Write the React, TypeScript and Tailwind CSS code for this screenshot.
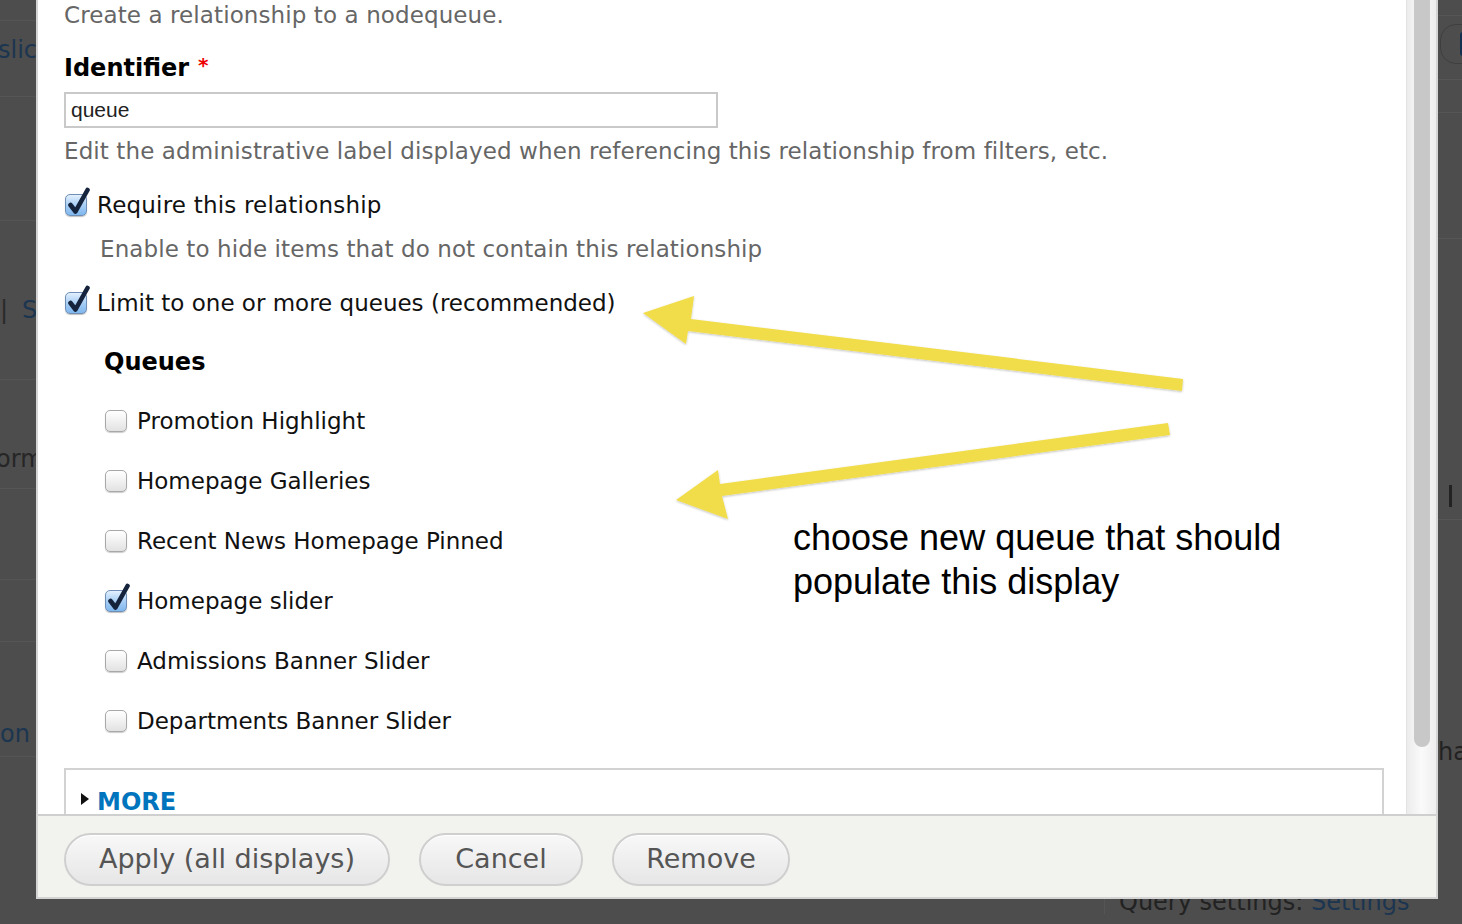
import React from "react";

const BODY = "font-['DejaVu_Sans','Noto_Sans',sans-serif]";

function Check({ checked }: { checked?: boolean }) {
  return (
    <span className="relative inline-block w-[22px] h-[22px] shrink-0">
      <span
        className={
          checked
            ? "absolute inset-0 rounded-[5px] border border-[#6f8fb6] bg-gradient-to-b from-[#e3f0fd] via-[#a9cff5] to-[#7fb7ee] shadow-[0_1px_1px_rgba(0,0,0,0.25)]"
            : "absolute inset-0 rounded-[5px] border border-[#a8a8a8] bg-gradient-to-b from-[#ffffff] via-[#f1f1f1] to-[#e2e2e2] shadow-[0_1px_1px_rgba(0,0,0,0.2)]"
        }
      />
      {checked && (
        <svg className="absolute left-[2px] top-[-7px]" width="24" height="29" viewBox="0 0 24 29">
          <path d="M3.5 18 L8.5 24.5 L20.5 3" fill="none" stroke="#15233d" strokeWidth="4.6" strokeLinecap="round" strokeLinejoin="round" />
        </svg>
      )}
    </span>
  );
}

function Row({ label, checked }: { label: string; checked?: boolean }) {
  return (
    <div className="h-[60px] flex items-center pl-[41px] gap-[10px]">
      <Check checked={checked} />
      <span className="text-[23px] text-[#111]">{label}</span>
    </div>
  );
}

function Btn({ children, w }: { children: React.ReactNode; w: string }) {
  return (
    <button
      className={`${w} h-[53px] rounded-full border-2 border-[#cfcfcf] bg-gradient-to-b from-[#f8f8f8] to-[#e6e6e6] text-[27px] text-[#555] flex items-center justify-center shadow-[0_1px_0_#fff_inset]`}
    >
      {children}
    </button>
  );
}

export default function App() {
  return (
    <div className={`relative w-[1462px] h-[924px] overflow-hidden bg-[#4d4d4d] ${BODY}`}>
      {/* background page fragments (behind overlay) */}
      <div className="absolute inset-0 flex justify-between">
        <div className="w-[36px] flex flex-col text-[24px]">
          <div className="h-[21px] border-b border-[#555]" />
          <div className="h-[76px] border-b border-[#555] flex items-start pt-[11px] text-[#1c3550] -ml-[2px]">slic</div>
          <div className="h-[124px] border-b border-[#555]" />
          <div className="h-[159px] border-b border-[#555] flex items-start pt-[71px] gap-[14px] text-[#1c3550]"><span className="text-[#2a2a2a]">|</span><span>S</span></div>
          <div className="h-[109px] border-b border-[#555] flex items-end pb-[11px] text-[#262626] -ml-[4px]">orm</div>
          <div className="h-[91px] border-b border-[#555]" />
          <div className="h-[62px] border-b border-[#555]" />
          <div className="h-[115px] border-b border-[#555] flex items-end pb-[4px] text-[#1c3550]">on</div>
          <div className="flex-1" />
        </div>
        <div className="w-[24px] flex flex-col text-[24px]">
          <div className="h-[16px] border-b border-[#555]" />
          <div className="h-[64px] border-b border-[#555] relative">
            <div className="absolute left-[2px] top-[8px] w-[40px] h-[40px] rounded-[16px] border border-[#3f3f3f]" />
            <div className="absolute left-[22px] top-[16px] w-[6px] h-[24px] rounded-full bg-[#143050]" />
          </div>
          <div className="h-[33px] border-b border-[#555]" />
          <div className="h-[126px] border-b border-[#555]" />
          <div className="h-[281px] border-b border-[#555] flex items-end pb-[12px] pl-[11px]"><div className="w-[3px] h-[22px] bg-[#222]" /></div>
          <div className="h-[250px] flex items-end text-[#222] whitespace-nowrap">har</div>
        </div>
      </div>
      <div className="absolute left-[1104px] top-[884px] w-[330px] h-[30px] border-l border-[#555] pl-[14px] text-[24px] text-[#222] whitespace-nowrap">
        Query settings: <span className="text-[#1c3550]">Settings</span>
      </div>

      {/* dialog */}
      <div className="absolute left-[36px] top-0 w-[1402px] h-[899px] flex flex-col border-l-2 border-r-2 border-b-2 border-[#d4d4d4] bg-white">
        <div className="flex-1 flex min-h-0">
          <div className="flex-1 pl-[26px] pr-[22px] overflow-hidden">
            <div className="h-[30px] flex items-center text-[23px] tracking-[0.1px] text-[#666] whitespace-nowrap">Create a relationship to a nodequeue.</div>
            <div className="mt-[23px] h-[30px] flex items-center text-[24px] font-bold text-black">
              Identifier <span className="ml-[9px] text-[#e00] text-[20px] -mt-[6px]">*</span>
            </div>
            <div className="mt-[9px] w-[654px] h-[36px] border-2 border-[#c9c9c9] flex items-center pl-[5px] text-[21px] text-[#222] font-['Liberation_Sans',sans-serif]">
              queue
            </div>
            <div className="mt-[8px] h-[30px] flex items-center text-[23px] tracking-[0.1px] text-[#666] whitespace-nowrap">
              Edit the administrative label displayed when referencing this relationship from filters, etc.
            </div>
            <div className="mt-[24px] h-[30px] flex items-center gap-[10px] pl-[1px]">
              <Check checked />
              <span className="text-[23px] tracking-[0.2px] text-[#111]">Require this relationship</span>
            </div>
            <div className="mt-[14px] h-[30px] flex items-center pl-[36px] text-[23px] tracking-[0.1px] text-[#666] whitespace-nowrap">
              Enable to hide items that do not contain this relationship
            </div>
            <div className="mt-[24px] h-[30px] flex items-center gap-[10px] pl-[1px]">
              <Check checked />
              <span className="text-[23px] text-[#111]">Limit to one or more queues (recommended)</span>
            </div>
            <div className="mt-[29px] h-[30px] flex items-center pl-[40px] text-[24px] font-bold text-black">Queues</div>
            <div className="mt-[14px]">
              <Row label="Promotion Highlight" />
              <Row label="Homepage Galleries" />
              <Row label="Recent News Homepage Pinned" />
              <Row label="Homepage slider" checked />
              <Row label="Admissions Banner Slider" />
              <Row label="Departments Banner Slider" />
            </div>
            <div className="mt-[17px] h-[80px] border-2 border-[#d2d2d2] pt-[14px] pl-[14px] flex items-start gap-[7px]">
              <svg width="10" height="14" viewBox="0 0 10 14" className="mt-[8px]"><path d="M1 1 L9 7 L1 13 Z" fill="#111" /></svg>
              <span className="text-[24px] font-bold text-[#0074bd]">MORE</span>
            </div>
          </div>
          {/* scrollbar */}
          <div className="w-[30px] bg-gradient-to-r from-[#ececec] via-[#fafafa] to-[#eeeeee] border-l border-[#e2e2e2] flex justify-center">
            <div className="w-[16px] h-[747px] bg-[#c8c8c8] rounded-b-full" />
          </div>
        </div>
        <div className="h-[83px] shrink-0 border-t-2 border-[#cfcfcf] bg-[#f2f2ee] flex items-start gap-[29px] pl-[26px] pt-[17px]">
          <Btn w="w-[326px]">Apply (all displays)</Btn>
          <Btn w="w-[164px]">Cancel</Btn>
          <Btn w="w-[178px]">Remove</Btn>
        </div>
      </div>

      {/* annotation */}
      <div className="absolute left-[793px] top-[516px] text-[36px] leading-[44px] text-black font-['Liberation_Sans',Arial,sans-serif]">
        choose new queue that should<br />populate this display
      </div>
      <svg className="absolute left-0 top-0 pointer-events-none" width="1462" height="924" viewBox="0 0 1462 924">
        <defs>
          <filter id="sh" x="-5%" y="-20%" width="110%" height="140%">
            <feDropShadow dx="0" dy="1" stdDeviation="1" floodColor="#000" floodOpacity="0.25" />
          </filter>
        </defs>
        <g fill="#f1dd4a" filter="url(#sh)">
          <polygon points="1183,379 1182,391 688,331 686,344 643,313 694,296 691,319" />
          <polygon points="1168,423 1170,435 722,496 728,519 676,500 718,470 720,484" />
        </g>
      </svg>
    </div>
  );
}
